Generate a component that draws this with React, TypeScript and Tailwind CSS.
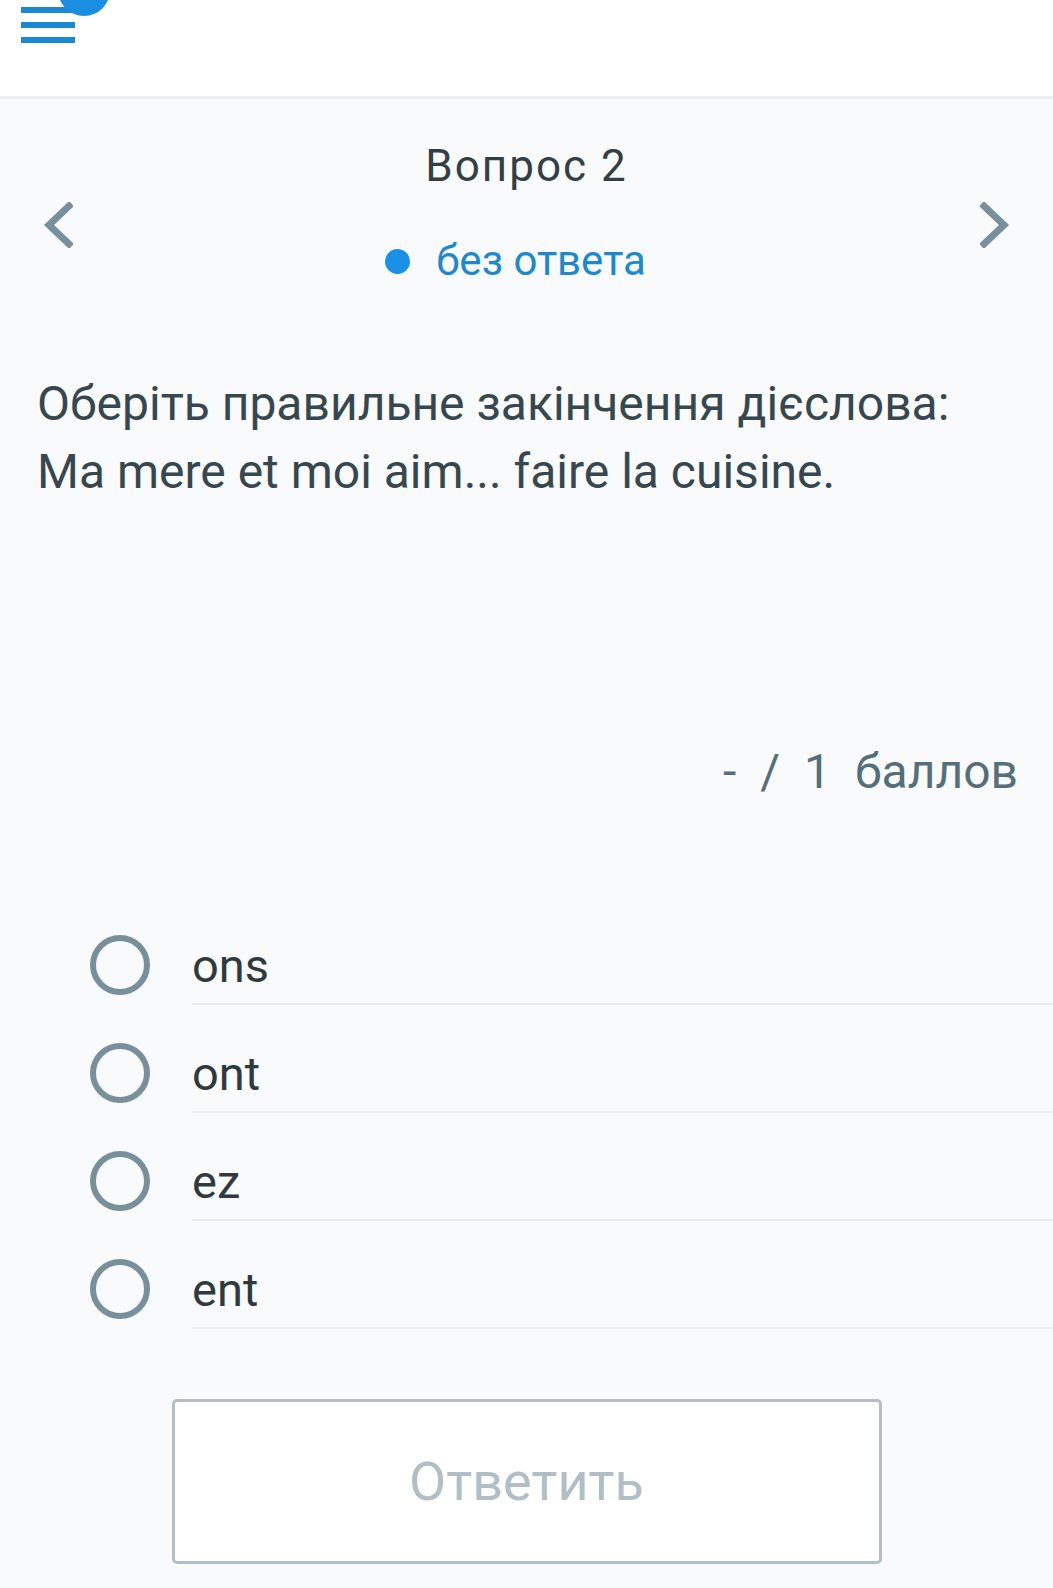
import React from "react";

const OPTIONS = ["ons", "ont", "ez", "ent"];

function Chevron({ dir }: { dir: "left" | "right" }) {
  const pts = dir === "left" ? "26,4 6,23 26,42" : "4,4 24,23 4,42";
  return (
    <svg width="30" height="46" viewBox="0 0 30 46" className="text-[#78909c]">
      <polyline points={pts} fill="none" stroke="currentColor" strokeWidth="7" strokeLinecap="square" strokeLinejoin="miter" />
    </svg>
  );
}

function Radio() {
  return <div className="mt-[38px] h-[60px] w-[60px] shrink-0 rounded-full border-[6px] border-[#78909c]" />;
}

export default function App() {
  return (
    <div className="min-h-[1588px] bg-[#f8fafb] font-['Roboto',sans-serif]">
      {/* header */}
      <div className="relative h-[99px] overflow-hidden border-b-[3px] border-[#eceff1] bg-white">
        <div className="ml-[21px] flex w-[54px] flex-col gap-[9px] pt-[7px]">
          <span className="h-[6px] bg-[#1a88d3]" />
          <span className="h-[6px] bg-[#1a88d3]" />
          <span className="h-[6px] bg-[#1a88d3]" />
        </div>
        <div className="absolute left-[58px] top-[-36px] flex h-[52px] w-[52px] items-end justify-center rounded-full bg-[#1a8ee0] pb-[12px] text-[26px] font-bold leading-none text-white">
          13
        </div>
      </div>

      {/* question navigation */}
      <div className="flex items-start justify-between px-[43px]">
        <div className="mt-[103px]">
          <Chevron dir="left" />
        </div>
        <div className="flex flex-col items-center">
          <div className="mt-[43px] text-[44px] leading-[48px] tracking-[2px] text-[#333f45]">Вопрос 2</div>
          <div className="mt-[47px] flex items-center gap-[26px] pr-[22px] text-[42px] leading-[48px] text-[#1e88cf]">
            <span className="h-[25px] w-[25px] rounded-full bg-[#1a90e6]" />
            <span>без ответа</span>
          </div>
        </div>
        <div className="mt-[103px]">
          <Chevron dir="right" />
        </div>
      </div>

      {/* question text */}
      <div className="mt-[85px] px-[37px] text-[48px] leading-[68px] text-[#37474f]">
        <p>Оберіть правильне закінчення дієслова:</p>
        <p>Ma mere et moi aim... faire la cuisine.</p>
      </div>

      {/* points */}
      <div className="mt-[240px] flex justify-end gap-[24px] pr-[35px] text-[48px] leading-[52px] text-[#546e7a]">
        <span>-</span>
        <span>/</span>
        <span>1</span>
        <span>баллов</span>
      </div>

      {/* options */}
      <div className="mt-[99px] pl-[90px]">
        {OPTIONS.map((o) => (
          <div key={o} className="flex gap-[42px]">
            <Radio />
            <div className="h-[108px] flex-1 border-b-2 border-[#e9edf0] pt-[42px] text-[47px] leading-[54px] text-[#2f3a3f]">
              {o}
            </div>
          </div>
        ))}
      </div>

      {/* submit */}
      <div className="mt-[70px] flex justify-center">
        <button className="h-[165px] w-[710px] rounded-[5px] border-[3px] border-[#b4bfc5] bg-white text-[54px] text-[#b0bec5]">
          Ответить
        </button>
      </div>
    </div>
  );
}
